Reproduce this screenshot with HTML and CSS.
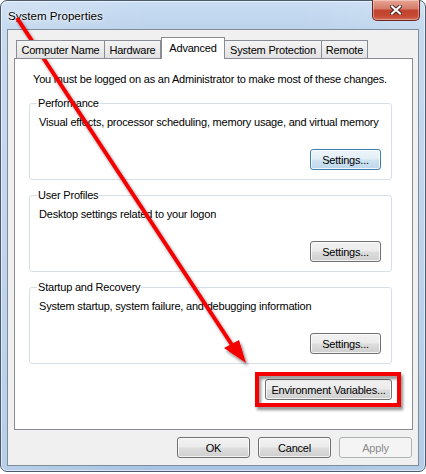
FILE: index.html
```html
<!DOCTYPE html>
<html lang="en">
<head>
<meta charset="utf-8">
<title>System Properties</title>
<link rel="stylesheet" href="styles.css">
</head>
<body>
<div class="window">
  <div class="titlebar">
    <span class="title">System Properties</span>
    <button class="close" aria-label="Close">
      <svg width="12" height="10" viewBox="0 0 12 10">
        <path d="M2 1.5 L10 8.5 M10 1.5 L2 8.5" stroke="#4a2323" stroke-width="4" stroke-linecap="square"/>
        <path d="M2 1.5 L10 8.5 M10 1.5 L2 8.5" stroke="#ffffff" stroke-width="2.2" stroke-linecap="square"/>
      </svg>
    </button>
  </div>
  <div class="client">
    <div class="tabs">
      <div class="tab tab--name">Computer Name</div>
      <div class="tab tab--hw">Hardware</div>
      <div class="tab tab--active">Advanced</div>
      <div class="tab tab--sp">System Protection</div>
      <div class="tab tab--remote">Remote</div>
    </div>
    <div class="panel">
      <p class="intro">You must be logged on as an Administrator to make most of these changes.</p>
      <fieldset class="group">
        <legend>Performance</legend>
        <p class="desc">Visual effects, processor scheduling, memory usage, and virtual memory</p>
        <div class="actions"><button class="btn btn--default btn--settings">Settings...</button></div>
      </fieldset>
      <fieldset class="group">
        <legend>User Profiles</legend>
        <p class="desc">Desktop settings related to your logon</p>
        <div class="actions"><button class="btn btn--settings">Settings...</button></div>
      </fieldset>
      <fieldset class="group">
        <legend>Startup and Recovery</legend>
        <p class="desc">System startup, system failure, and debugging information</p>
        <div class="actions"><button class="btn btn--settings">Settings...</button></div>
      </fieldset>
      <div class="env-row"><button class="btn btn--env">Environment Variables...</button></div>
    </div>
    <div class="footer">
      <button class="btn btn--dialog">OK</button>
      <button class="btn btn--dialog">Cancel</button>
      <button class="btn btn--dialog btn--disabled">Apply</button>
    </div>
  </div>
  <svg class="annotation" width="426" height="474" viewBox="0 0 426 474">
    <defs>
      <filter id="shadow" x="-20%" y="-20%" width="140%" height="140%">
        <feDropShadow dx="2" dy="3" stdDeviation="1.8" flood-color="#000" flood-opacity="0.45"/>
      </filter>
    </defs>
    <g filter="url(#shadow)">
      <line x1="17" y1="18" x2="234" y2="348" stroke="#f40000" stroke-width="4"/>
      <polygon points="246,363 224,348 239,340" fill="#f40000"/>
      <rect x="257" y="374" width="142" height="31" fill="none" stroke="#f40000" stroke-width="4"/>
    </g>
  </svg>
</div>
</body>
</html>
```

FILE: styles.css
```css
* { box-sizing: border-box; }

html, body {
  margin: 0;
  padding: 0;
  background: #ffffff;
}

body {
  width: 426px;
  height: 474px;
  font-family: "Liberation Sans", Arial, sans-serif;
  font-size: 11px;
  letter-spacing: -0.2px;
  color: #000;
  overflow: hidden;
}

.window {
  position: relative;
  width: 426px;
  height: 472px;
  border: 1px solid #4b5a6c;
  border-radius: 7px;
  padding: 0 6px 5px 6px;
  background:
    linear-gradient(90deg, rgba(255,255,255,0.18), rgba(255,255,255,0) 35%, rgba(255,255,255,0) 70%, rgba(255,255,255,0.15)),
    linear-gradient(180deg, #c9ddf2 0%, #bcd3ec 28px, #b2cbe8 60%, #a8c4e4 100%);
  box-shadow: inset 0 0 0 1px rgba(255,255,255,0.55);
}

.titlebar {
  height: 28px;
  display: flex;
  align-items: center;
  justify-content: space-between;
  padding-left: 1px;
}

.title {
  font-size: 11.6px;
  letter-spacing: 0;
  color: #000;
  text-shadow: 0 0 6px rgba(255,255,255,0.9), 0 0 2px rgba(255,255,255,0.9);
}

.close {
  align-self: flex-start;
  margin-top: -1px;
  margin-right: -1px;
  width: 48px;
  height: 21px;
  padding: 0;
  border: 1px solid #6e2424;
  border-top: none;
  border-radius: 0 0 5px 5px;
  background: linear-gradient(180deg, #e8a493 0%, #d47a68 45%, #c2442f 50%, #c64a35 80%, #d36a52 100%);
  box-shadow: inset 0 0 0 1px rgba(255,255,255,0.35);
  display: flex;
  align-items: center;
  justify-content: center;
}

.client {
  height: 437px;
  border: 1px solid #7f8c9a;
  background: #f0f0f0;
  display: flex;
  flex-direction: column;
}

.tabs {
  display: flex;
  align-items: flex-end;
  height: 22px;
  margin-top: 7px;
  margin-bottom: -1px;
  padding-left: 8px;
  position: relative;
  z-index: 1;
}

.tab {
  height: 19px;
  border: 1px solid #898c95;
  background: linear-gradient(180deg, #f4f4f4 0%, #ebebeb 50%, #e1e1e1 100%);
  display: flex;
  align-items: center;
  justify-content: center;
  white-space: nowrap;
}

.tab + .tab { margin-left: -1px; }

.tab--name { width: 89px; }
.tab--hw { width: 57px; }
.tab--sp { width: 98px; }
.tab--remote { width: 47px; }

.tab--active {
  width: 64px;
  height: 22px;
  margin-left: 0 !important;
  border-bottom: none;
  background: #ffffff;
  padding-bottom: 2px;
  position: relative;
  z-index: 2;
}

.panel {
  height: 372px;
  margin: 0 5px 0 6px;
  border: 1px solid #898c95;
  background: #ffffff;
  display: flex;
  flex-direction: column;
}

.intro {
  margin: 13px 0 0 18px;
  line-height: 15px;
}

.group {
  margin: 9px 20px 0 14px;
  padding: 4px 10px 9px 9px;
  border: 1px solid #d5dfe5;
  border-radius: 3px;
  display: flex;
  flex-direction: column;
}

.group + .group { margin-top: 8px; }

.group legend {
  margin-left: -2px;
  padding: 0 1px;
  line-height: 15px;
}

.desc {
  margin: 0;
  line-height: 15px;
}

.actions {
  display: flex;
  justify-content: flex-end;
  margin-top: 19px;
}

.btn {
  height: 21px;
  padding: 0;
  font-family: inherit;
  font-size: 11px;
  letter-spacing: -0.2px;
  color: #000;
  border: 1px solid #707070;
  border-radius: 3px;
  background: linear-gradient(180deg, #f2f2f2 0%, #ebebeb 48%, #dddddd 52%, #cfcfcf 100%);
  box-shadow: inset 0 0 0 1px rgba(255,255,255,0.75);
}

.btn--settings { width: 71px; }

.btn--default {
  border-color: #3c7fb1;
  background: linear-gradient(180deg, #eef5fa 0%, #e2eef7 48%, #cfe3f1 52%, #bcd7ec 100%);
  box-shadow: inset 0 0 0 1px rgba(255,255,255,0.8);
}

.env-row {
  display: flex;
  justify-content: flex-end;
  margin: 15px 20px 0 0;
}

.btn--env { width: 127px; }

.footer {
  display: flex;
  justify-content: flex-end;
  gap: 8px;
  margin-top: 7px;
  padding-right: 6px;
}

.btn--dialog { width: 73px; }

.btn--disabled {
  color: #8b8b8b;
  border-color: #adb2b5;
  background: #f4f4f4;
  box-shadow: none;
}

.annotation {
  position: absolute;
  left: -1px;
  top: -1px;
  pointer-events: none;
  overflow: visible;
}
```
